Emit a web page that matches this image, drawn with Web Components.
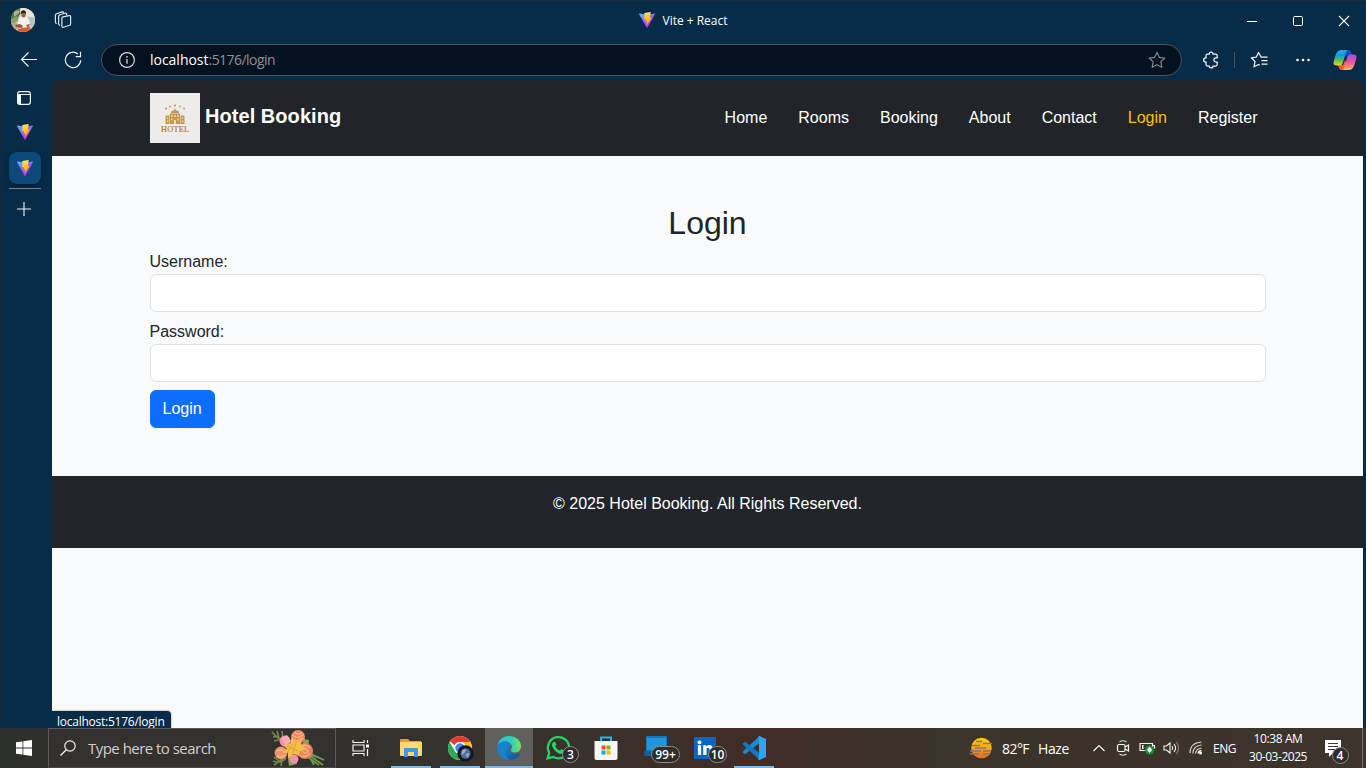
<!DOCTYPE html>
<html lang="en">
<head>
<meta charset="utf-8">
<title>Vite + React</title>
<style>
html,body{margin:0;height:100%;overflow:hidden}
body{font-family:"Open Sans","Noto Sans",sans-serif;color:#fff}
</style>
</head>
<body>
<desktop-screen></desktop-screen>
<script>
const define=(name,css,html,extra)=>customElements.define(name,class extends HTMLElement{
  connectedCallback(){
    if(this.shadowRoot)return;
    this.attachShadow({mode:'open'}).innerHTML=`<style>*{box-sizing:border-box}svg{display:block;overflow:visible}${css}</style>${typeof html==='function'?html(this):html}`;
    if(extra)extra(this);
  }
});

const icons={
vite:['0 0 32 32',`<defs><linearGradient id="a" x1="0" y1="0" x2="18" y2="28" gradientUnits="userSpaceOnUse"><stop stop-color="#41d1ff"/><stop offset=".9" stop-color="#bd34fe"/></linearGradient><linearGradient id="b" x1="15" y1="2" x2="18" y2="23" gradientUnits="userSpaceOnUse"><stop stop-color="#ffea83"/><stop offset=".1" stop-color="#ffdd35"/><stop offset="1" stop-color="#ffa800"/></linearGradient></defs><path fill="url(#a)" d="M31.8 4.600 17 31a1.100 1.100 0 0 1-1.900 0L.15 4.600A1.100 1.100 0 0 1 1.300 3l14.700 2.500L30.700 3a1.100 1.100 0 0 1 1.100 1.600Z"/><path fill="url(#b)" d="M23.500 0 11 2l-.9 12.500 3.900.1-1 4.900 3.300-.6-1.300 8.600L25.500 11.500l-3.900.2L23.500 0Z"/>`],
avatar:['0 0 24 24',`<clipPath id="c"><circle cx="12" cy="12" r="12"/></clipPath><g clip-path="url(#c)"><path fill="#d6d0c1" d="M0 0h24v24H0z"/><path fill="#55733f" d="M0 0h9v6l-3 6-6 1z"/><path fill="#a9b888" d="M3 2l6 1-2 3-4 3z"/><path fill="#8aa06a" d="M0 11l6-3 1 5-7 4z"/><path fill="#f0e3d5" d="M10 0h14v10H10z"/><path fill="#b8c3bd" d="M17 9h7v10h-7z"/><path fill="#c5a987" d="M0 15h8v6H0z"/><path fill="#f7f1ee" d="M9 9h7l3 5-1 5H9l-3-2z"/><path fill="#8d5c46" d="M4 17l5-1 3 2-1 2-6-1zM15 17l4-1-2 4z"/><ellipse cx="12.500" cy="6.500" rx="2.200" ry="3" fill="#94604c"/><path fill="#241d1e" d="M9.800 6c-.5-5 5.700-5 5.400 0l-2-1.500z"/><path fill="#df5b2b" d="M7 21l5-1 7-1 1 5H7z"/></g>`],
workspaces:['0 0 18 18',`<g fill="none" stroke="#d9e3eb" stroke-width="1.200" stroke-linejoin="round"><path d="M8.200 6.200 15 4.600q1.600-.3 1.600 1.100v7.200q0 1-1 1.400l-6.200 1.900q-1.500.4-1.500-1.100V7.500q0-1 .3-1.300Z"/><path d="M12.600 4.400V3.200q-.2-1.300-1.600-1L6 3.800q-1.400.4-1.400 1.600v7.400q0 1.300 1.400 1.500"/><path d="M9.500 2.200V1.700q-.2-1.200-1.500-.8L2.700 2.700Q1.400 3.200 1.400 4.200v6.700q0 1.300 1.400 1.600"/></g>`],
back:['0 0 18 18',`<path d="M17 8.500H1.500M8.500 1.500 1.500 8.500l7 7" fill="none" stroke="#e9eff4" stroke-width="1.200"/>`],
reload:['0 0 18 18',`<path d="M16.700 9.300A7.700 7.700 0 1 1 13.900 3M16.500.8v4.800h-4.800" fill="none" stroke="#eef2f5" stroke-width="1.200"/>`],
info:['0 0 16 16',`<circle cx="8" cy="8" r="7.400" fill="none" stroke="#d4d9dd" stroke-width="1.200"/><path d="M8 7v4.800" stroke="#d4d9dd" stroke-width="1.300"/><circle cx="8" cy="4.800" r=".9" fill="#d4d9dd"/>`],
star:['0 0 18 18',`<path d="m9 1.400 2.350 4.900 5.400.75-3.900 3.800.95 5.400L9 13.700l-4.800 2.550.95-5.400-3.900-3.800 5.400-.75Z" fill="none" stroke="#7f8990" stroke-width="1.200" stroke-linejoin="round"/>`],
puzzle:['0 0 18 18',`<path d="M5.500 3H7.200C7.300.4 11 .4 11 3h2.500c1.200 0 1.700.5 1.700 1.500v2.300h-1.500c-2.500.1-2.500 4 0 4.200h1.500v2.500c0 1-.6 1.500-1.700 1.500H11c0 2.600-3.700 2.600-3.800 0H5.500C4.400 15 4 14.500 4 13.500V11c-3.200-.2-3.200-4 0-4.200V4.500C4 3.500 4.400 3 5.500 3Z" fill="none" stroke="#f1f4f6" stroke-width="1.250"/>`],
favs:['0 0 18 18',`<path d="M11 5.700 8.500 1.500 6.300 6.100l-5 .7 3.700 3.700-1 5.300 4.500-2.300 1.300.7M10.500 6h7M11.500 9.500h6M11.500 13h6" fill="none" stroke="#edf1f4" stroke-width="1.250" stroke-linejoin="round"/>`],
dots:['0 0 16 16',`<g fill="#f4f6f8"><circle cx="2.500" cy="8" r="1.300"/><circle cx="8" cy="8" r="1.300"/><circle cx="13.500" cy="8" r="1.300"/></g>`],
copilot:['0 0 24 24',`<defs><linearGradient id="p" x1="0" y1="0" x2="0" y2="1"><stop stop-color="#20a8ef"/><stop offset=".35" stop-color="#149bdc"/><stop offset=".65" stop-color="#55bf58"/><stop offset="1" stop-color="#f8d510"/></linearGradient><linearGradient id="q" x1="0" y1="0" x2="0" y2="1"><stop stop-color="#9c52ef"/><stop offset=".45" stop-color="#e65198"/><stop offset="1" stop-color="#ffb066"/></linearGradient></defs><path fill="#1649c9" d="M11 2h4.500c1.500 0 2.200 1 2.700 2.600L19 7h-3c-2 0-3 1-3.500 3z"/><path fill="#f65a32" d="M5 17h5l2-5 2 5-1.300 3c-.6 1.300-1.200 2-2.700 2H8.600c-1.700 0-2.300-1.200-2.700-2.500z"/><path fill="url(#p)" d="M15 2H8C4.500 2 3 5.500 1.500 10.500c-1.200 4-2 7 2.500 7h2.500c2 0 2.900-1.300 3.500-3.300L12.800 5c.4-1.500 1-2.500 2.200-3Z"/><path fill="url(#q)" d="M9 22h7c3.500 0 5-3.500 6.500-8.500 1.200-4 2-7-2.500-7h-2.500c-2 0-2.900 1.300-3.500 3.300L11.200 19c-.4 1.500-1 2.500-2.200 3Z"/>`],
tabs:['0 0 14 14',`<rect x=".6" y=".6" width="12.800" height="12.800" rx="2.300" fill="none" stroke="#eff3f6" stroke-width="1.200"/><path d="M.5 3.500H4V13.500H2.500Q.5 13.500.5 11.500Z" fill="#f4f7f9"/><path d="M1 3.500h12" stroke="#eff3f6"/>`],
plus:['0 0 14 14',`<path d="M7 0v14M0 7h14" stroke="#f0f4f7" stroke-width="1.100"/>`],
min:['0 0 10 10',`<path d="M0 6.500h10" stroke="#fff"/>`],
max:['0 0 10 10',`<rect x=".5" y="1.500" width="9" height="9" rx="1.200" fill="none" stroke="#fff"/>`],
close:['0 0 10 10',`<path d="m0 1 10 10M10 1 0 11" stroke="#fff" stroke-width="1.100"/>`],
hotel:['0 0 50 50',`<path fill="#eeecea" d="M0 0h50v50H0z"/><g fill="#c39a43"><circle cx="16" cy="15.500" r="1"/><circle cx="20" cy="13.500" r=".9"/><circle cx="25" cy="12.500" r="1.100"/><circle cx="30" cy="13.500" r=".9"/><circle cx="34" cy="15.500" r="1"/><path d="M24.500 15.500h1v1.500l3.500 1.500v1.500h-8v-1.500l3.500-1.500zM20 20.500h10V31H20zM15.500 22.500h4V31h-4zM30.500 22.500h4V31h-4z"/></g><g fill="#eadcba"><rect x="21.200" y="22" width="1.400" height="2"/><rect x="24.300" y="22" width="1.400" height="2"/><rect x="27.400" y="22" width="1.400" height="2"/><rect x="21.200" y="25.500" width="1.400" height="2"/><rect x="27.400" y="25.500" width="1.400" height="2"/><rect x="24" y="27" width="2" height="4"/><rect x="16.800" y="24.500" width="1.400" height="1.500"/><rect x="16.800" y="27.500" width="1.400" height="1.500"/><rect x="31.800" y="24.500" width="1.400" height="1.500"/><rect x="31.800" y="27.500" width="1.400" height="1.500"/></g><text x="11" y="38.500" textLength="28" font-family="Liberation Serif,serif" font-weight="400" font-size="8.200" fill="#ad812c" stroke="#ad812c" stroke-width=".2">HOTEL</text>`],
windows:['0 0 16 16',`<path fill="#fff" d="M0 2.300 6.500 1.400v6.200H0zM7.300 1.300 16 0v7.600H7.300zM0 8.400h6.500v6.200L0 13.700zM7.300 8.400H16V16l-8.700-1.300z"/>`],
search:['0 0 16 16',`<circle cx="10" cy="6" r="5.200" fill="none" stroke="#f1f1f1" stroke-width="1.200"/><path d="M6.300 9.700.5 15.500" stroke="#f1f1f1" stroke-width="1.300"/>`],
flowers:['0 0 54 38',`<g fill="none" stroke="#75874b" stroke-width="1.600"><path d="M1 3Q7 11 16 12M2 8l6-1M3 12l8-2M6 2l2 7M11 2l1 8M2 32q8 3 13-3M3 36l7-5M10 37l1-7M3 28l5 4"/></g><path d="M35 24 52 36M34 26 48 36M36 23l17 8M35 24l16 6M38 27l5 9" fill="none" stroke="#739a48" stroke-width="1.700"/><path fill="#87a152" d="M33 10l5 1-1 8-6-1zM17 30l7-3 2 8-8 2z"/><circle cx="14" cy="12" r="5.500" fill="#f28fa6"/><path fill="#f8aab9" d="M10 9l6-3 4 6-5 4z"/><circle cx="27" cy="8" r="7" fill="#ea895d"/><path d="M21 6q6 5 12-1M23 3q5 4 8 0M23 11q6 2 9-2" fill="none" stroke="#f7ac86" stroke-width="1.500"/><circle cx="23" cy="30" r="4.500" fill="#f291ab"/><circle cx="10" cy="24" r="6.500" fill="#ed9168"/><path d="M6 22q5-3 8 2M6 27q5 3 8-1" fill="none" stroke="#fab18b" stroke-width="1.600"/><circle cx="34" cy="22" r="8" fill="#e98158"/><path d="M28 19q5-6 11 0M29 26q5 4 10-2M30 22q3-4 7 0-3 4-6 0" fill="none" stroke="#f9ad85" stroke-width="1.600"/><path fill="#f2bf48" d="m12 16 7-1 2-7 4 6 5-5v7l6 3-7 3-1 5-5-2-6 5v-6l-5-1 4-3z"/><path d="m15 25 7-10M21 26l4-12M16 17l11 5" stroke="#d99b2d" stroke-width=".8"/>`],
taskview:['0 0 18 18',`<path d="M1 1v2.500h11V1M1 17v-2.500h11V17" fill="none" stroke="#f3f3f3" stroke-width="1.200"/><path d="M1 6h11v6H1zM15.500 1v3M15.500 10v7" fill="none" stroke="#f3f3f3" stroke-width="1.200"/><path d="M14 5.500h3v3h-3z" fill="#fff"/>`],
folder:['0 0 22 20',`<path fill="#dca125" d="M0 2q0-1 1-1h7l2 2h11v14H0z"/><path fill="#ffd96b" d="M0 4h22v13q0 1-1 1H1q-1 0-1-1z"/><path fill="#3c9be2" d="M4 11q0-1 1-1h12q1 0 1 1v8h-4v-5H8v5H4z"/>`],
chrome:['0 0 28 28',`<circle cx="12" cy="12" r="12" fill="#fff"/><path fill="#e33b2e" d="M12 0a12 12 0 0 1 10.400 6H12a6 6 0 0 0-5.300 3.200L2 5.400A12 12 0 0 1 12 0Z"/><path fill="#31a852" d="M1.600 6 6.800 15a6 6 0 0 0 6.700 2.800L10.800 24A12 12 0 0 1 1.600 6Z"/><path fill="#fbc116" d="M12 6h10.400A12 12 0 0 1 10.800 24l5.500-8.500A6 6 0 0 0 12 6Z"/><circle cx="12" cy="12" r="5.900" fill="#fff"/><circle cx="12" cy="12" r="4.700" fill="#4285f4"/><circle cx="17.500" cy="17.500" r="8.200" fill="#111723"/><ellipse cx="17.500" cy="17.500" rx="5" ry="5.200" fill="#496ea3"/><path fill="#a3b1ad" d="m14.500 14 4-1-2 4-3 2zM17.500 18l4-1-2 5z"/>`],
edge:['0 0 24 24',`<defs><linearGradient id="e"><stop stop-color="#30bdf2"/><stop offset=".6" stop-color="#30cfbc"/><stop offset="1" stop-color="#7fdd5a"/></linearGradient><linearGradient id="f" x2="1" y2="1"><stop stop-color="#168bd2"/><stop offset="1" stop-color="#12499a"/></linearGradient></defs><path fill="url(#e)" d="M.1 11C1 4.300 6 0 12 0c7 0 12 4.800 12 10 0 4.500-3 6.500-6.300 6.500-2.700 0-4.100-1-4.100-1.700 0-.9 1.300-1.300 1.300-3.500 0-3.500-3.400-5.700-7-5.700C4 5.600 1 8 .1 11Z"/><path fill="#1682d0" d="M0 12c0-4 3.700-6.600 8.100-6.600 4 0 6.800 2.500 6.800 5.800C12 8.400 8 11 8 15.200c0 4 2.500 7.500 5.500 8.700C6 24.500 0 19 0 12Z"/><path fill="url(#f)" d="M8 15.200c0-2.500 1.600-4.700 3.500-5.500-.8 5.400 3.500 8.500 8 8.500 1.700 0 3-1.100 3.500-.5.500.7-3.500 6.200-9.500 6.200C10.500 23 8 19 8 15.200Z"/>`],
whatsapp:['0 0 24 24',`<path fill="none" stroke="#26d366" stroke-width="2.300" d="m1.600 22.400 1.600-5.700A10.600 10.600 0 1 1 7.500 21z"/><path fill="#26d366" d="M7.700 6c.7-.6 1.400-.4 1.700.3l.9 2.200c.2.600-1.200 1.600-1 2 1 1.900 2.300 3 4.300 4 .5.200 1.400-1.600 2-1.300l2.200 1.100c1 .5.300 2.300-.6 2.900-2 1.400-5 .1-7.300-1.800C7.500 13.200 5 9.500 6.300 7.300Z"/>`],
store:['0 0 24 24',`<path d="M7 7V1.500h10V7" fill="none" stroke="#23b8e3" stroke-width="2"/><path fill="#f6f6f6" d="M.5 5h23v17q0 2-2 2h-19q-2 0-2-2z"/><path fill="#ef4f25" d="M7.500 9.500h4v4h-4z"/><path fill="#7eba00" d="M12.500 9.500h4v4h-4z"/><path fill="#16a5eb" d="M7.500 14.500h4v4h-4z"/><path fill="#ffb900" d="M12.500 14.500h4v4h-4z"/>`],
phone:['0 0 24 24',`<path fill="#1479be" d="M2 1q0-1 1-1h19q1 0 1 1v17H2z"/><path fill="#2196db" d="M3 2h19v12H3z"/><path fill="#0e5f9e" d="M0 15h16v5H2q-2 0-2-2z"/><path fill="#45b5ea" d="M9 12h12v9H9z"/>`],
linkedin:['0 0 22 22',`<rect width="22" height="22" rx="1" fill="#0a66c2"/><g fill="#fff"><circle cx="5.500" cy="5.300" r="1.900"/><path d="M3.900 8.300h3.300V18H3.900zM9.200 8.300h3.100v1.400c1.500-2.500 6.600-2.400 6.600 2.300v6h-3.300v-5.200c0-3-3.100-2.700-3.100 0V18H9.200z"/></g>`],
vscode:['0 0 24 24',`<path fill="#1f8ad2" d="M17.500 0v7L3 18.300.3 16z"/><path fill="#1578bc" d="M17.500 24v-7L3 5.700.3 8z"/><path fill="#2ea3ee" d="m17.500 0 6.500 3v18l-6.500 3q-1 0-1.500-1l1-2V3l-1-2q.5-1 1.500-1z"/>`],
haze:['0 0 24 22',`<defs><linearGradient id="h" x2="0" y2="1"><stop stop-color="#ffd000"/><stop offset=".5" stop-color="#fba31c"/><stop offset="1" stop-color="#f2671f"/></linearGradient></defs><circle cx="12.500" cy="11" r="10.300" fill="url(#h)"/><path d="M7 4.500h6M14 6.500h9M3 8.500h8M6 11h11M1 14h11M14 14h8M.5 17h10M13 17h8" stroke="#827a72" stroke-width="1.500"/>`],
up:['0 0 12 8',`<path d="m.5 7 5.500-5.500L11.500 7" fill="none" stroke="#f3f3f3" stroke-width="1.200"/>`],
meet:['0 0 14 16',`<path d="M3.500 2q3.500-2.500 7 0M3.500 14q3.500 2.500 7 0" fill="none" stroke="#d6d3d0" stroke-width="1.100"/><path d="M3 4.500h4.500Q9 4.500 9 6v4q0 1.500-1.500 1.500H3Q1.500 11.500 1.500 10V6Q1.500 4.500 3 4.500ZM9 7l3.500-2v6L9 9" fill="none" stroke="#f3f3f3" stroke-width="1.200"/>`],
battery:['0 0 17 14',`<path d="M1 2.500h12.500v7H1zM14 4.500h1.500v3" fill="none" stroke="#f3f3f3" stroke-width="1.200"/><path d="M3 4h1.500v4H3z" fill="#fff"/><circle cx="10.500" cy="9" r="4.700" fill="#148a2e"/><path d="M10.500 5.900q4 3.700 0 5-4-1.300 0-5M10.500 8v4.300" fill="#fff" stroke="#fff" stroke-width=".6"/>`],
speaker:['0 0 17 14',`<path d="M1 5h2.500L7 2v10L3.500 9H1zM9 5q1.500 2 0 4M11 3q3.200 4 0 8" fill="none" stroke="#f3f3f3" stroke-width="1.100"/><path d="M13.300 1q4.500 6 0 12" fill="none" stroke="#8b857e" stroke-width="1.100"/>`],
wifi:['0 0 14 14',`<g fill="none" stroke="#d6d2cd" stroke-width="1.200"><path d="M1 12Q1 2 12.500 1M3.800 12.500Q4 5 12.500 4M6.500 12.500Q7 8 12.500 7"/><path d="M9 12.500q.2-2.500 3.500-2.800" stroke="#fff"/></g><circle cx="11.500" cy="12" r="1.500" fill="#fff"/>`],
notice:['0 0 18 18',`<path fill="#fff" d="M0 1h16v13H8l-4 4v-4H0z"/><path d="M3 4.500h10M3 7.500h10M3 10.500h7" stroke="#403831" stroke-width="1.100"/>`]
};

/* An inline SVG glyph: <svg-icon name w h> */
define('svg-icon',':host{display:block;flex:none}',el=>{const[v,p]=icons[el.getAttribute('name')];return`<svg viewBox="${v}" width="${el.getAttribute('w')}" height="${el.getAttribute('h')||el.getAttribute('w')}" aria-hidden="true">${p}</svg>`});

/* One line of text, tracked so that it fills the given width */
define('fit-text',':host{display:block;flex:none;white-space:nowrap}span{display:inline-block}','<span><slot></slot></span>',el=>{
  const s=el.shadowRoot.querySelector('span'),w=+el.getAttribute('w'),n=el.textContent.length;
  s.style.letterSpacing=((w-s.getBoundingClientRect().width)/n)+'px';
});

/* Fixed-width cell with centred content */
define('icon-cell',':host{display:flex;align-items:center;justify-content:center;flex:none}','<slot></slot>',el=>{el.style.width=el.getAttribute('w')+'px'});

define('title-bar',`
:host{display:grid;grid-template-columns:1fr auto 1fr;align-items:center;height:40px}
.left{display:flex;padding-left:2px}.mid{display:flex;gap:8px;align-items:center;font-size:12px;line-height:16px}.mid fit-text{padding-top:1px}.right{display:flex;justify-content:flex-end}`,
`<div class="left"><icon-cell w="41"><svg-icon name="avatar" w="24"></svg-icon></icon-cell><icon-cell w="40"><svg-icon name="workspaces" w="18"></svg-icon></icon-cell></div>
<div class="mid"><svg-icon name="vite" w="16"></svg-icon><fit-text w="65">Vite + React</fit-text></div>
<div class="right"><icon-cell w="46"><svg-icon name="min" w="10"></svg-icon></icon-cell><icon-cell w="46"><svg-icon name="max" w="10"></svg-icon></icon-cell><icon-cell w="45"><svg-icon name="close" w="10"></svg-icon></icon-cell></div>`);

define('address-bar',`
:host{display:flex;align-items:center;flex:1;height:32px;border:1px solid #4a545d;border-radius:16px;background:#04111e;padding:0 15px 0 17px;font-size:14px;line-height:20px}
.url{flex:1;display:flex;margin-left:15px}.rest{color:#8b9298}`,
`<svg-icon name="info" w="16"></svg-icon><div class="url"><fit-text w="58.500">localhost</fit-text><fit-text class="rest" w="66.500">:5176/login</fit-text></div><svg-icon name="star" w="18"></svg-icon>`);

define('tool-bar',`
:host{display:flex;align-items:center;height:40px}
.nav{display:flex;padding-left:7px;width:101px}.acts{display:flex;align-items:center;width:184px;padding-left:7px}
i{width:1px;height:16px;background:#3b566b;margin:0 2px}`,
`<div class="nav"><icon-cell w="44"><svg-icon name="back" w="18"></svg-icon></icon-cell><icon-cell w="44"><svg-icon name="reload" w="18"></svg-icon></icon-cell></div>
<address-bar></address-bar>
<div class="acts"><icon-cell w="43"><svg-icon name="puzzle" w="18"></svg-icon></icon-cell><i></i><icon-cell w="44"><svg-icon name="favs" w="18"></svg-icon></icon-cell><icon-cell w="43"><svg-icon name="dots" w="16"></svg-icon></icon-cell><icon-cell w="42"><svg-icon name="copilot" w="24"></svg-icon></icon-cell></div>`);

define('side-tabs',`
:host{display:flex;flex-direction:column;align-items:center;width:52px;padding:11px 2px 0 0;box-sizing:border-box}
svg-icon[w="14"]{margin-right:2px}
.tab{display:flex;align-items:center;justify-content:center;height:16px;margin:19px 0 12px}
.on{display:flex;align-items:center;justify-content:center;width:32px;height:32px;border-radius:8px;background:#0c4a7c;box-shadow:0 2px 4px #0006}
hr{width:32px;height:1px;border:0;background:#6a7f90;margin:4px 0 13px}`,
`<svg-icon name="tabs" w="14"></svg-icon><div class="tab"><svg-icon name="vite" w="16"></svg-icon></div><div class="on"><svg-icon name="vite" w="16"></svg-icon></div><hr><svg-icon name="plus" w="14"></svg-icon>`);

define('site-nav',`
:host{display:block;height:76px;background:#212529}
.in{display:flex;align-items:center;justify-content:space-between;width:1116px;height:76px;margin:0 auto}
.brand{display:flex;align-items:center;gap:5px;font-weight:700;font-size:20px;line-height:30px}.brand b{margin:-5px 0 0 .5px;letter-spacing:.05px}
nav{display:flex;gap:15px}a{padding:8px;line-height:24px}.on{color:#ffc107}`,
`<div class="in"><div class="brand"><svg-icon name="hotel" w="50"></svg-icon><b>Hotel Booking</b></div><nav><a>Home</a><a>Rooms</a><a>Booking</a><a>About</a><a>Contact</a><a class="on">Login</a><a>Register</a></nav></div>`);

define('form-field',`
:host{display:block;margin-bottom:8px}label{display:block;line-height:24px}
input{display:block;width:100%;height:38px;border:1px solid #dee2e6;border-radius:6px;background:#fff;outline:0}`,
el=>`<label>${el.getAttribute('label')}</label><input>`);

define('login-form',`
:host{display:block;width:1116px;margin:0 auto;padding:48px 0}
h2{margin:0 0 8px;font-size:32px;line-height:38.4px;font-weight:400;text-align:center}
button{display:block;height:38px;border:1px solid #0d6efd;border-radius:6px;background:#0d6efd;color:#fff;font:16px/24px "Liberation Sans",Arial,sans-serif;padding:0 12px}`,
`<h2>Login</h2><form-field label="Username:"></form-field><form-field label="Password:"></form-field><button>Login</button>`);

define('site-footer',`:host{display:block;height:71.600px;padding-top:16px;box-sizing:border-box;background:#212529;color:#fff;text-align:center;line-height:24px}`,`© 2025 Hotel Booking. All Rights Reserved.`);

define('web-page',`
:host{display:block;flex:1;position:relative;height:648px;margin-right:3px;overflow:hidden;border-radius:8px 8px 0 0;background:linear-gradient(#212529 40px,#f8fafc 40px);color:#fff;font:16px/24px "Liberation Sans",Arial,sans-serif}
login-form{color:#212529}
.status{position:absolute;left:0;bottom:0;height:17px;width:119px;padding:2px 0 0 5px;border-radius:0 4px 0 0;background:#082c47;box-shadow:0 0 2px #0008;font:12px/17px "Open Sans",sans-serif}`,
`<site-nav></site-nav><login-form></login-form><site-footer></site-footer><div class="status"><fit-text w="107.500">localhost:5176/login</fit-text></div>`);

define('count-badge',`
:host{position:absolute;display:flex;align-items:center;justify-content:center;height:17px;min-width:17px;box-sizing:border-box;border:1px solid #8d8b88;border-radius:9px;background:#2e2d2c;color:#fff;font:600 12px/14px "Open Sans",sans-serif}`,'<slot></slot>');

define('task-app',`
:host{display:flex;align-items:center;justify-content:center;position:relative;width:49px;height:40px;flex:none}
:host([open]){background:linear-gradient(#76b9ed,#76b9ed) 50% 100%/40px 2px no-repeat}
:host([active]){background:linear-gradient(#76b9ed,#76b9ed) 1px 100%/48px 2px no-repeat,linear-gradient(#5f605e,#5f605e) 1px 0/48px 100% no-repeat}`,
'<slot></slot>');

define('search-box',`
:host{display:flex;align-items:center;width:288px;height:40px;border:1px solid #5d5b59;border-bottom-color:#4b4948;background:#323130;padding-left:11px;font-size:15px;color:#d0cfce;box-sizing:border-box}
fit-text{margin:0 0 0 12px}.f{margin-left:auto;padding-right:10px}`,
`<svg-icon name="search" w="16"></svg-icon><fit-text w="128">Type here to search</fit-text><svg-icon class="f" name="flowers" w="54" h="38"></svg-icon>`);

define('system-tray',`
:host{display:flex;align-items:center;margin-left:auto;width:397px;height:40px;font-size:14px}
.t1{margin:0 9px}.eng{margin-left:4px;font-size:12px}.clock{display:flex;flex-direction:column;align-items:center;width:84px;font-size:12px;line-height:18px}
.note{position:relative;width:41px;padding-left:5px}.end{width:1px;height:40px;background:#777069;margin-left:1px}count-badge{left:11.500px;top:8px}`,
`<svg-icon name="haze" w="24" h="22"></svg-icon><fit-text class="t1" w="27">82°F</fit-text><fit-text w="31">Haze</fit-text>
<icon-cell w="24" style="margin-left:18px"><svg-icon name="up" w="12" h="8"></svg-icon></icon-cell><icon-cell w="24"><svg-icon name="meet" w="14" h="16"></svg-icon></icon-cell><icon-cell w="24"><svg-icon name="battery" w="17" h="14"></svg-icon></icon-cell><icon-cell w="24"><svg-icon name="speaker" w="17" h="14"></svg-icon></icon-cell><icon-cell w="26"><svg-icon name="wifi" w="14"></svg-icon></icon-cell>
<fit-text class="eng" w="23">ENG</fit-text><div class="clock"><fit-text w="49">10:38 AM</fit-text><fit-text w="58">30-03-2025</fit-text></div><div class="note"><svg-icon name="notice" w="18"></svg-icon><count-badge>4</count-badge></div><div class="end"></div>`);

define('task-bar',`
:host{display:flex;align-items:center;height:40px;background:linear-gradient(90deg,#2e302b 0,#34312c 30%,#38312c 42%,#412c27 56%,#3c3029 63%,#3b352b 70%,#3b3229 80%,#3d342c 100%);overflow:hidden}`,
`<icon-cell w="48"><svg-icon name="windows" w="16"></svg-icon></icon-cell><search-box></search-box><icon-cell w="50"><svg-icon name="taskview" w="18"></svg-icon></icon-cell>
<task-app open><svg-icon name="folder" w="22" h="20"></svg-icon></task-app>
<task-app open><svg-icon name="chrome" w="28" style="margin:4px 0 0 5px"></svg-icon></task-app>
<task-app active><svg-icon name="edge" w="24"></svg-icon></task-app>
<task-app><svg-icon name="whatsapp" w="24"></svg-icon><count-badge style="left:29px;top:18px">3</count-badge></task-app>
<task-app><svg-icon name="store" w="24" style="margin-right:2px"></svg-icon></task-app>
<task-app><svg-icon name="phone" w="24"></svg-icon><count-badge style="left:20px;top:18px;width:29px">99+</count-badge></task-app>
<task-app><svg-icon name="linkedin" w="22"></svg-icon><count-badge style="left:28px;top:18px;width:19px">10</count-badge></task-app>
<task-app open><svg-icon name="vscode" w="24"></svg-icon></task-app>
<system-tray></system-tray>`);

define('desktop-screen',`
:host{display:block;width:1366px;height:768px;overflow:hidden;background:#082c47}
.win{box-shadow:inset 0 1px #1c2d38,inset 1px 0 #172a38}.body{display:flex;height:648px}`,
`<div class="win"><title-bar></title-bar><tool-bar></tool-bar><div class="body"><side-tabs></side-tabs><web-page></web-page></div></div><task-bar></task-bar>`);
</script>
</body>
</html>
